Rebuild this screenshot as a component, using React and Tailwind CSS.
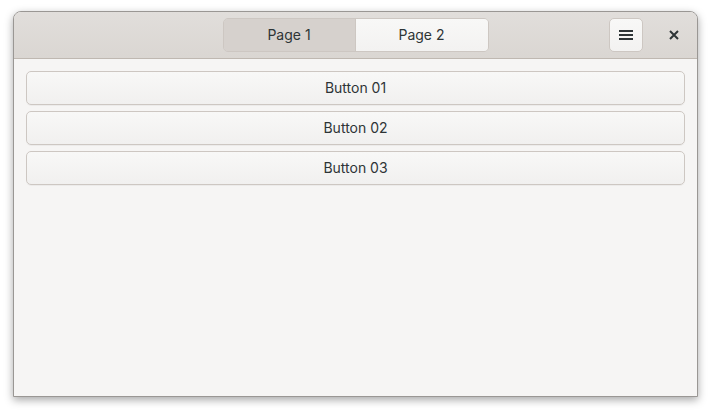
import React, { useState } from "react";

const font = { fontFamily: "Inter, 'Noto Sans', sans-serif" };

const App = () => {
  const [page, setPage] = useState(1);
  const buttons = ["Button 01", "Button 02", "Button 03"];

  return (
    <div className="w-[711px] h-[413px] bg-white pt-[11px] pl-[13px]" style={font}>
      <div className="w-[685px] h-[386px] flex flex-col rounded-t-[8px] border border-[#9a9794] bg-[#f6f5f4] shadow-[0_3px_9px_rgba(0,0,0,0.35)] overflow-hidden">
        {/* header bar */}
        <div className="h-[47px] shrink-0 grid grid-cols-[1fr_auto_1fr] items-center border-b border-[#bfb8b1] bg-gradient-to-t from-[#dad6d2] to-[#e1dedb]">
          <div />
          <div className="flex h-[34px] rounded-[5px] border border-[#cdc7c2] overflow-hidden text-[14px] text-[#2e3436]">
            <button
              onClick={() => setPage(1)}
              className={`w-[132px] pb-[1px] ${page === 1 ? "bg-[#d6d1cd]" : "bg-gradient-to-b from-[#f8f8f7] to-[#f3f2f1]"} border-r border-[#cdc7c2]`}
            >
              Page 1
            </button>
            <button
              onClick={() => setPage(2)}
              className={`w-[132px] pb-[1px] ${page === 2 ? "bg-[#d6d1cd]" : "bg-gradient-to-b from-[#f8f8f7] to-[#f3f2f1]"}`}
            >
              Page 2
            </button>
          </div>
          <div className="flex items-center justify-end gap-[14px] pr-[6px]">
            <button className="w-[34px] h-[34px] flex items-center justify-center rounded-[5px] border border-[#cdc7c2] bg-gradient-to-b from-[#f8f8f7] to-[#f3f2f1]">
              <svg width="16" height="16" viewBox="0 0 16 16">
                <rect x="1" y="3" width="14" height="2" fill="#2e3436" />
                <rect x="1" y="7" width="14" height="2" fill="#2e3436" />
                <rect x="1" y="11" width="14" height="2" fill="#2e3436" />
              </svg>
            </button>
            <button className="w-[34px] h-[34px] flex items-center justify-center">
              <svg width="10" height="10" viewBox="0 0 10 10">
                <path d="M1 1 L9 9 M9 1 L1 9" stroke="#2e3436" strokeWidth="2" />
              </svg>
            </button>
          </div>
        </div>

        {/* content */}
        <div className="flex-1 flex flex-col gap-[6px] p-[12px]">
          {buttons.map((b) => (
            <button
              key={b}
              className="h-[34px] pb-[2px] rounded-[5px] border border-[#cdc7c2] bg-gradient-to-b from-[#f8f8f7] to-[#f1f0ef] text-[14px] text-[#2e3436] shadow-[0_1px_0_rgba(0,0,0,0.04)]"
            >
              {b}
            </button>
          ))}
        </div>
      </div>
    </div>
  );
};

export default App;
